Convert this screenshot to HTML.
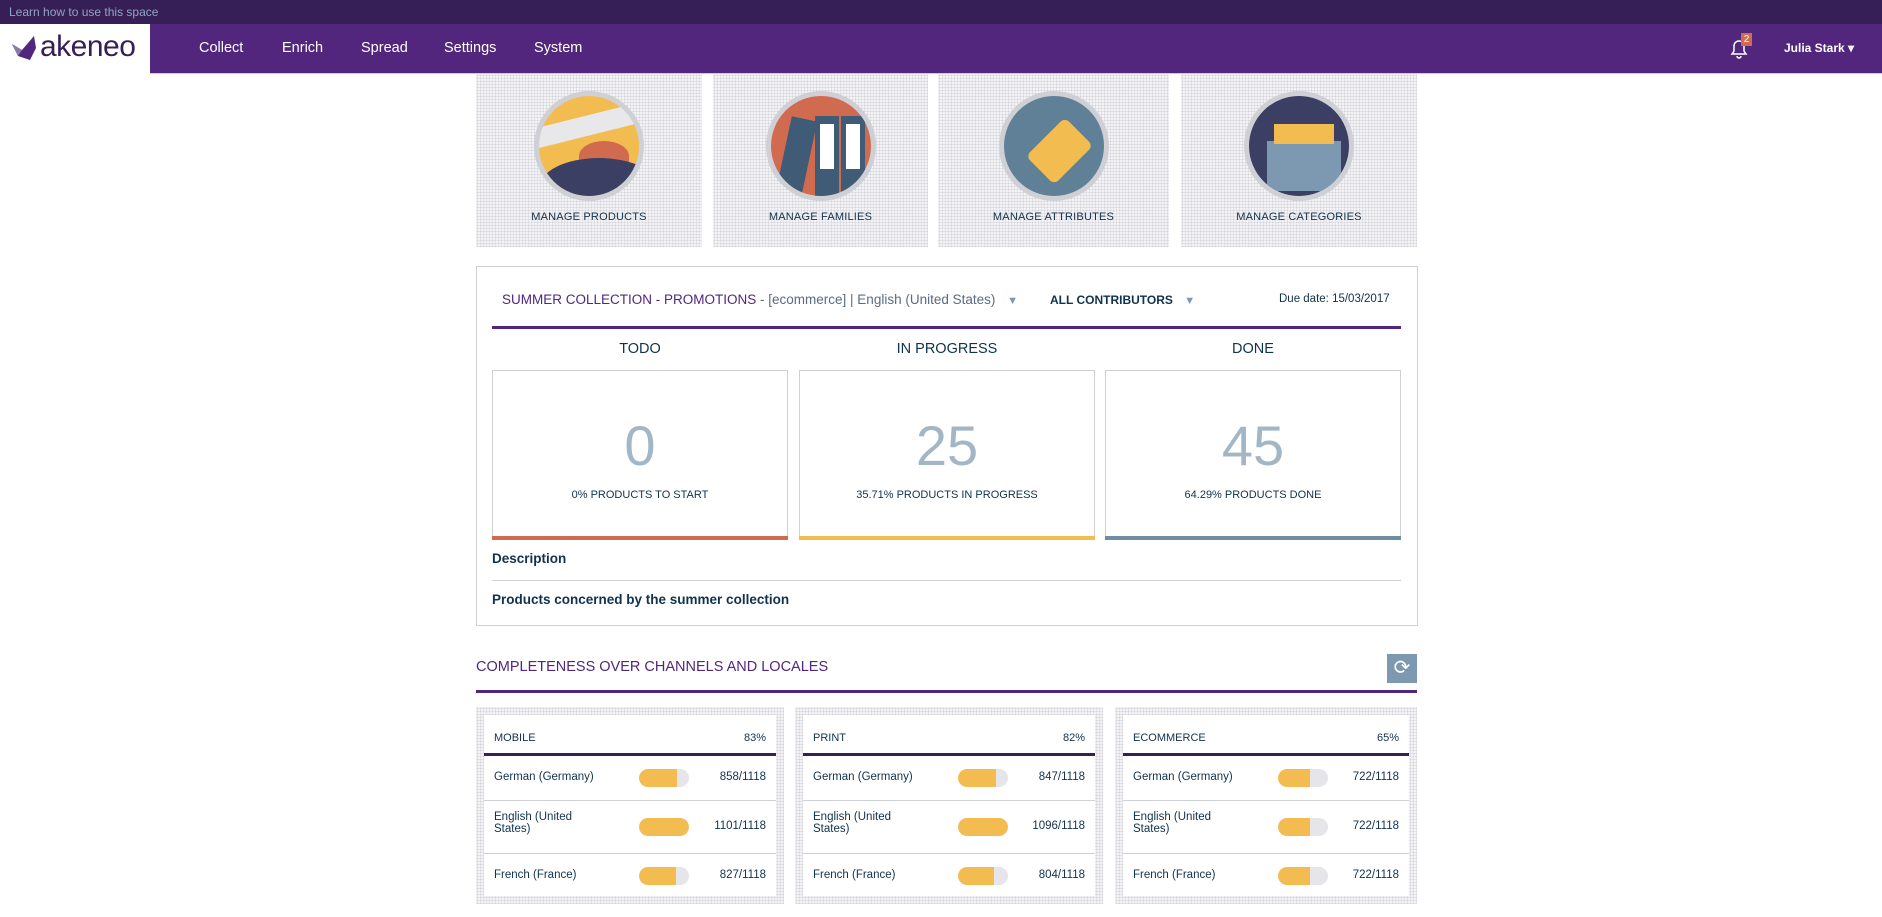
<!DOCTYPE html>
<html><head><meta charset="utf-8"><style>
*{box-sizing:border-box;margin:0;padding:0}
body{width:1882px;height:917px;overflow:hidden;background:#fff;font-family:"Liberation Sans",sans-serif;color:#11324d;position:relative}
.abs{position:absolute}
.dots{background-color:#f3f3f5;background-image:radial-gradient(#d4d4da 0.8px,transparent 1px);background-size:3px 3px}
.top{left:0;top:0;width:1882px;height:24px;background:#361e56;color:#8fa6c2;font-size:12px;line-height:24px;padding-left:9px}
.nav{left:0;top:24px;width:1882px;height:50px;background:#52267d;border-bottom:1px solid #ccc}
.logo{left:0;top:0;width:150px;height:50px;background:#fff}
.nav .it{position:absolute;top:16px;color:#fff;font-size:14.5px}
.tile{top:74px;height:173px;text-align:center}
.tile .lab{position:absolute;left:0;right:0;top:137px;font-size:11px;color:#11324d;letter-spacing:.2px}
.circ{position:absolute;left:50%;top:17px;width:110px;height:110px;margin-left:-55px;border-radius:50%;border:5px solid #cfd0d5;overflow:hidden}
.panel{left:476px;top:266px;width:942px;height:360px;border:1px solid #d0d1d6}
.col{font-size:14.5px;color:#11324d;text-align:center}
.box{border:1px solid #cfd0d6;text-align:center;height:170px;top:370px}
.box .n{position:absolute;left:0;right:0;top:42px;font-size:56px;color:#a3b6c6}
.box .s{position:absolute;left:0;right:0;top:118px;font-size:11px;color:#11324d}
.box .b{position:absolute;left:-1px;right:-1px;bottom:-1px;height:4px}
.ch{top:707px;height:197px;padding:8px}
.chi{background:#fff;height:100%;position:relative}
.ch .h{position:absolute;left:10px;right:10px;top:17px;font-size:11px;display:flex;justify-content:space-between}
.ch .ln{position:absolute;left:0;right:0;top:38px;height:3px;background:#361e56}
.row{position:absolute;left:10px;right:10px;font-size:11.5px;color:#11324d}
.row .bar{position:absolute;left:145px;width:50px;height:18px;border-radius:9px;background:#e6e6ea;overflow:hidden}
.row .bar i{position:absolute;left:0;top:0;bottom:0;background:#f3bc50;border-radius:9px 0 0 9px}
.row .v{position:absolute;right:0}
.sep{position:absolute;left:0;right:0;height:1px;background:#d0d1d6}
</style></head><body>
<div class="abs top">Learn how to use this space</div>
<div class="abs nav">
 <div class="abs logo">
  <svg class="abs" style="left:10px;top:10px" width="28" height="30" viewBox="0 0 28 30"><path d="M2 10 L12 16 L24 2 L26 14 L20 26 L8 22 Z" fill="#52267d"/><path d="M2 10 L12 16 L8 22 Z" fill="#8b7aa8"/></svg>
  <div class="abs" style="left:40px;top:6px;font-size:30px;color:#361e56;letter-spacing:-.5px">akeneo</div>
 </div>
 <div class="it" style="left:199px">Collect</div>
 <div class="it" style="left:282px">Enrich</div>
 <div class="it" style="left:361px">Spread</div>
 <div class="it" style="left:444px">Settings</div>
 <div class="it" style="left:534px">System</div>
 <svg class="abs" style="left:1728px;top:12px" width="22" height="24" viewBox="0 0 22 24"><path d="M4 18 L6 15 V10 a5 5 0 0 1 10 0 V15 L18 18 Z M9 20 a2 2 0 0 0 4 0" fill="none" stroke="#fff" stroke-width="1.5"/></svg>
 <div class="abs" style="left:1741px;top:9px;width:11px;height:13px;background:#d16b50;color:#fff;font-size:10px;text-align:center;line-height:13px">2</div>
 <div class="abs" style="left:1784px;top:17px;color:#fff;font-size:12px;font-weight:bold">Julia Stark ▾</div>
</div>

<div class="abs tile dots" style="left:476px;width:226px"><div class="circ" style="background:#f3bc50"><div class="abs" style="left:-10px;top:18px;width:130px;height:20px;background:#e8e8ea;transform:rotate(-14deg)"></div><div class="abs" style="left:40px;top:45px;width:50px;height:30px;background:#d16b50;border-radius:50% 50% 0 0"></div><div class="abs" style="left:0;top:62px;width:120px;height:60px;background:#3a3f63;border-radius:50%"></div></div><div class="lab">MANAGE PRODUCTS</div></div>
<div class="abs tile dots" style="left:713px;width:215px"><div class="circ" style="background:#d16b50"><div class="abs" style="left:12px;top:22px;width:26px;height:82px;background:#3f5b75;transform:rotate(12deg)"></div><div class="abs" style="left:44px;top:20px;width:24px;height:90px;background:#3f5b75"></div><div class="abs" style="left:70px;top:20px;width:24px;height:90px;background:#3f5b75"></div><div class="abs" style="left:49px;top:28px;width:14px;height:45px;background:#fff"></div><div class="abs" style="left:75px;top:28px;width:14px;height:45px;background:#fff"></div></div><div class="lab">MANAGE FAMILIES</div></div>
<div class="abs tile dots" style="left:938px;width:231px"><div class="circ" style="background:#5f8096"><div class="abs" style="left:28px;top:35px;width:55px;height:40px;background:#f3bc50;border-radius:6px;transform:rotate(-45deg)"></div></div><div class="lab">MANAGE ATTRIBUTES</div></div>
<div class="abs tile dots" style="left:1181px;width:236px"><div class="circ" style="background:#3a3f63"><div class="abs" style="left:18px;top:45px;width:74px;height:50px;background:#7d99b1"></div><div class="abs" style="left:25px;top:28px;width:60px;height:20px;background:#f3bc50"></div></div><div class="lab">MANAGE CATEGORIES</div></div>

<div class="abs panel"></div>
<div class="abs" style="left:502px;top:292px;font-size:13.5px;color:#52267d">SUMMER COLLECTION - PROMOTIONS <span style="color:#5a6b85">- [ecommerce] | English (United States)</span> <span style="color:#7d99b1;font-size:11px;margin-left:8px">▼</span></div>
<div class="abs" style="left:1050px;top:293px;font-size:12px;font-weight:bold;color:#11324d">ALL CONTRIBUTORS <span style="color:#7d99b1;font-size:11px;margin-left:8px">▼</span></div>
<div class="abs" style="left:1279px;top:293px;font-size:11.5px;color:#11324d">Due date: 15/03/2017</div>
<div class="abs" style="left:492px;top:326px;width:909px;height:3px;background:#52267d"></div>
<div class="abs col" style="left:492px;top:341px;width:296px">TODO</div>
<div class="abs col" style="left:799px;top:341px;width:296px">IN PROGRESS</div>
<div class="abs col" style="left:1105px;top:341px;width:296px">DONE</div>
<div class="abs box" style="left:492px;width:296px"><div class="n">0</div><div class="s">0% PRODUCTS TO START</div><div class="b" style="background:#d16b50"></div></div>
<div class="abs box" style="left:799px;width:296px"><div class="n">25</div><div class="s">35.71% PRODUCTS IN PROGRESS</div><div class="b" style="background:#f3bc50"></div></div>
<div class="abs box" style="left:1105px;width:296px"><div class="n">45</div><div class="s">64.29% PRODUCTS DONE</div><div class="b" style="background:#6f8ea3"></div></div>
<div class="abs" style="left:492px;top:551px;font-size:13.5px;font-weight:bold;color:#11324d">Description</div>
<div class="abs" style="left:492px;top:580px;width:909px;height:1px;background:#d0d1d6"></div>
<div class="abs" style="left:492px;top:592px;font-size:13.5px;font-weight:bold;color:#11324d">Products concerned by the summer collection</div>

<div class="abs" style="left:476px;top:659px;font-size:14.5px;color:#52267d">COMPLETENESS OVER CHANNELS AND LOCALES</div>
<div class="abs" style="left:1387px;top:654px;width:30px;height:29px;background:#7d99b1;color:#fff;font-size:20px;text-align:center;line-height:29px">⟳</div>
<div class="abs" style="left:476px;top:690px;width:941px;height:3px;background:#52267d"></div>

<div class="abs ch dots" style="left:476px;width:308px"><div class="chi">
 <div class="h"><span>MOBILE</span><span>83%</span></div><div class="ln"></div>
 <div class="row" style="top:56px">German (Germany)<div class="bar" style="top:-2px"><i style="width:38px"></i></div><span class="v">858/1118</span></div>
 <div class="sep" style="top:85px"></div>
 <div class="row" style="top:96px">English (United<br>States)<div class="bar" style="top:7px"><i style="width:50px;border-radius:9px"></i></div><span class="v" style="top:9px">1101/1118</span></div>
 <div class="sep" style="top:138px"></div>
 <div class="row" style="top:154px">French (France)<div class="bar" style="top:-2px"><i style="width:37px"></i></div><span class="v">827/1118</span></div>
</div></div>
<div class="abs ch dots" style="left:795px;width:308px"><div class="chi">
 <div class="h"><span>PRINT</span><span>82%</span></div><div class="ln"></div>
 <div class="row" style="top:56px">German (Germany)<div class="bar" style="top:-2px"><i style="width:38px"></i></div><span class="v">847/1118</span></div>
 <div class="sep" style="top:85px"></div>
 <div class="row" style="top:96px">English (United<br>States)<div class="bar" style="top:7px"><i style="width:50px;border-radius:9px"></i></div><span class="v" style="top:9px">1096/1118</span></div>
 <div class="sep" style="top:138px"></div>
 <div class="row" style="top:154px">French (France)<div class="bar" style="top:-2px"><i style="width:36px"></i></div><span class="v">804/1118</span></div>
</div></div>
<div class="abs ch dots" style="left:1115px;width:302px"><div class="chi">
 <div class="h"><span>ECOMMERCE</span><span>65%</span></div><div class="ln"></div>
 <div class="row" style="top:56px">German (Germany)<div class="bar" style="top:-2px"><i style="width:32px"></i></div><span class="v">722/1118</span></div>
 <div class="sep" style="top:85px"></div>
 <div class="row" style="top:96px">English (United<br>States)<div class="bar" style="top:7px"><i style="width:32px"></i></div><span class="v" style="top:9px">722/1118</span></div>
 <div class="sep" style="top:138px"></div>
 <div class="row" style="top:154px">French (France)<div class="bar" style="top:-2px"><i style="width:32px"></i></div><span class="v">722/1118</span></div>
</div></div>
</body></html>
